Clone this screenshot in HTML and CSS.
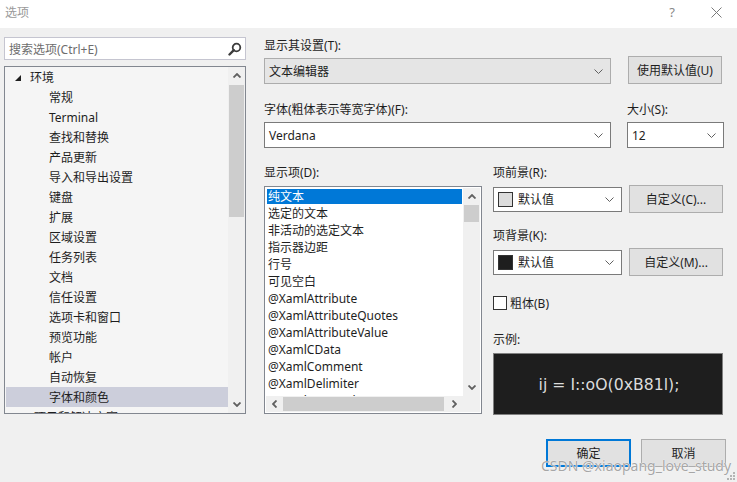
FILE: index.html
```html
<!DOCTYPE html>
<html lang="zh-CN">
<head>
    <meta charset="UTF-8">
    <title>选项</title>
    <link rel="stylesheet" href="styles.css">
</head>
<body>
    <div class="titlebar">
        <span class="title">选项</span>
        <span class="help">?</span>
        <svg class="close" width="11" height="11" viewBox="0 0 11 11"><path d="M0.5 0.5L10.5 10.5M10.5 0.5L0.5 10.5" stroke="#7a7a7a" stroke-width="1" fill="none"/></svg>
    </div>

    <div class="main">
        <!-- 左侧：搜索和树 -->
        <div class="sidebar">
            <div class="search">
                <span class="placeholder">搜索选项(Ctrl+E)</span>
                <svg width="14" height="14" viewBox="0 0 14 14"><circle cx="8.5" cy="5.5" r="3.8" stroke="#3c3c3c" stroke-width="1.8" fill="none"/><path d="M5.8 8.2L1.5 12.5" stroke="#3c3c3c" stroke-width="2.4" stroke-linecap="round"/></svg>
            </div>
            <div class="tree">
                <ul class="tree-items">
                    <li class="node"><svg class="tri" width="6" height="6" viewBox="0 0 6 6"><path d="M6 0V6H0Z" fill="#1e1e1e"/></svg>环境</li>
                    <li class="leaf">常规</li>
                    <li class="leaf">Terminal</li>
                    <li class="leaf">查找和替换</li>
                    <li class="leaf">产品更新</li>
                    <li class="leaf">导入和导出设置</li>
                    <li class="leaf">键盘</li>
                    <li class="leaf">扩展</li>
                    <li class="leaf">区域设置</li>
                    <li class="leaf">任务列表</li>
                    <li class="leaf">文档</li>
                    <li class="leaf">信任设置</li>
                    <li class="leaf">选项卡和窗口</li>
                    <li class="leaf">预览功能</li>
                    <li class="leaf">帐户</li>
                    <li class="leaf">自动恢复</li>
                    <li class="leaf selected">字体和颜色</li>
                    <li class="node sub">项目和解决方案</li>
                </ul>
                <div class="vscroll">
                    <span class="sbtn"><svg width="8" height="5" viewBox="0 0 8 5"><path d="M0.5 4.5L4 1L7.5 4.5" stroke="#606060" stroke-width="1.8" fill="none"/></svg></span>
                    <div class="track"><div class="thumb tree-thumb"></div></div>
                    <span class="sbtn"><svg width="8" height="5" viewBox="0 0 8 5"><path d="M0.5 0.5L4 4L7.5 0.5" stroke="#606060" stroke-width="1.8" fill="none"/></svg></span>
                </div>
            </div>
        </div>

        <!-- 右侧：设置 -->
        <div class="settings">
            <div class="row first">
                <div class="field wide">
                    <div class="lbl">显示其设置(T):</div>
                    <div class="combo readonly">
                        <span>文本编辑器</span>
                        <svg width="9" height="5" viewBox="0 0 9 5"><path d="M0.5 0.5L4.5 4.5L8.5 0.5" stroke="#606060" fill="none"/></svg>
                    </div>
                </div>
                <button class="btn">使用默认值(U)</button>
            </div>

            <div class="row second">
                <div class="field wide">
                    <div class="lbl">字体(粗体表示等宽字体)(F):</div>
                    <div class="combo">
                        <span>Verdana</span>
                        <svg width="9" height="5" viewBox="0 0 9 5"><path d="M0.5 0.5L4.5 4.5L8.5 0.5" stroke="#606060" fill="none"/></svg>
                    </div>
                </div>
                <div class="field size">
                    <div class="lbl">大小(S):</div>
                    <div class="combo">
                        <span>12</span>
                        <svg width="9" height="5" viewBox="0 0 9 5"><path d="M0.5 0.5L4.5 4.5L8.5 0.5" stroke="#606060" fill="none"/></svg>
                    </div>
                </div>
            </div>

            <div class="row third">
                <div class="items-col">
                    <div class="lbl">显示项(D):</div>
                    <div class="listbox">
                        <ul class="list-items">
                            <li class="selected">纯文本</li>
                            <li>选定的文本</li>
                            <li>非活动的选定文本</li>
                            <li>指示器边距</li>
                            <li>行号</li>
                            <li>可见空白</li>
                            <li>@XamlAttribute</li>
                            <li>@XamlAttributeQuotes</li>
                            <li>@XamlAttributeValue</li>
                            <li>@XamlCData</li>
                            <li>@XamlComment</li>
                            <li>@XamlDelimiter</li>
                            <li>@XamlKeyword</li>
                        </ul>
                        <div class="vscroll small">
                            <span class="sbtn"><svg width="8" height="5" viewBox="0 0 8 5"><path d="M0.5 4.5L4 1L7.5 4.5" stroke="#606060" stroke-width="1.8" fill="none"/></svg></span>
                            <div class="track"><div class="thumb list-thumb"></div></div>
                            <span class="sbtn"><svg width="8" height="5" viewBox="0 0 8 5"><path d="M0.5 0.5L4 4L7.5 0.5" stroke="#606060" stroke-width="1.8" fill="none"/></svg></span>
                        </div>
                        <div class="hscroll">
                            <span class="sbtn"><svg width="5" height="8" viewBox="0 0 5 8"><path d="M4.5 0.5L1 4L4.5 7.5" stroke="#606060" stroke-width="1.8" fill="none"/></svg></span>
                            <div class="htrack"><div class="hthumb"></div></div>
                            <span class="sbtn"><svg width="5" height="8" viewBox="0 0 5 8"><path d="M0.5 0.5L4 4L0.5 7.5" stroke="#606060" stroke-width="1.8" fill="none"/></svg></span>
                        </div>
                        <div class="corner"></div>
                    </div>
                </div>

                <div class="color-col">
                    <div class="lbl">项前景(R):</div>
                    <div class="color-row">
                        <div class="combo color">
                            <span class="swatch light"></span>
                            <span>默认值</span>
                            <svg width="9" height="5" viewBox="0 0 9 5"><path d="M0.5 0.5L4.5 4.5L8.5 0.5" stroke="#606060" fill="none"/></svg>
                        </div>
                        <button class="btn">自定义(C)...</button>
                    </div>

                    <div class="lbl gap">项背景(K):</div>
                    <div class="color-row">
                        <div class="combo color">
                            <span class="swatch dark"></span>
                            <span>默认值</span>
                            <svg width="9" height="5" viewBox="0 0 9 5"><path d="M0.5 0.5L4.5 4.5L8.5 0.5" stroke="#606060" fill="none"/></svg>
                        </div>
                        <button class="btn">自定义(M)...</button>
                    </div>

                    <label class="check"><span class="box"></span>粗体(B)</label>

                    <div class="lbl sample-lbl">示例:</div>
                    <div class="sample">ij = I::oO(0xB81l);</div>
                </div>
            </div>
        </div>
    </div>

    <div class="footer">
        <button class="btn ok">确定</button>
        <button class="btn cancel">取消</button>
    </div>

    <div class="watermark">CSDN @xiaopang_love_study</div>
    <svg class="grip" width="8" height="8" viewBox="0 0 8 8" fill="#b4b4b4">
        <rect x="6" y="0" width="2" height="2"/><rect x="3" y="3" width="2" height="2"/><rect x="6" y="3" width="2" height="2"/>
        <rect x="0" y="6" width="2" height="2"/><rect x="3" y="6" width="2" height="2"/><rect x="6" y="6" width="2" height="2"/>
    </svg>
</body>
</html>
```

FILE: styles.css
```css
:root {
    --bg: #f0f0f0;
    --text: #1e1e1e;
    --border: #828790;
    --btn-bg: #e1e1e1;
    --btn-border: #adadad;
    --accent: #0078d7;
}

* {
    margin: 0;
    padding: 0;
    box-sizing: border-box;
}

body {
    width: 737px;
    height: 482px;
    background: var(--bg);
    color: var(--text);
    font-family: "Noto Sans", "Noto Sans CJK SC", sans-serif;
    font-size: 12px;
    overflow: hidden;
    position: relative;
}

ul {
    list-style: none;
}

.titlebar {
    height: 28px;
    background: #fff;
    display: flex;
    align-items: center;
    padding-left: 5px;
}

.title {
    color: #999;
    flex: 1;
    margin-top: -4px;
}

.help {
    color: #888;
    font-size: 13px;
    margin-right: 36px;
    margin-top: -4px;
}

.close {
    margin-right: 15px;
    margin-top: -4px;
}

.main {
    display: flex;
    padding: 9px 0 0 4px;
}

/* 左侧 */
.sidebar {
    width: 242px;
    display: flex;
    flex-direction: column;
}

.search {
    height: 23px;
    background: #fff;
    border: 1px solid #c5c5d0;
    display: flex;
    align-items: center;
    justify-content: space-between;
    padding: 0 3px 0 4px;
}

.placeholder {
    color: #6d6d6d;
}

.tree {
    margin-top: 6px;
    height: 348px;
    border: 1px solid var(--border);
    background: #f5f5f5;
    display: flex;
    overflow: hidden;
}

.tree-items {
    flex: 1;
    padding-left: 1px;
}

.tree-items li {
    height: 20px;
    line-height: 20px;
    padding-top: 1px;
    white-space: nowrap;
    display: flex;
    align-items: center;
}

.tree-items .node {
    padding-left: 9px;
}

.tree-items .node .tri {
    margin-right: 9px;
}

.tree-items .node.sub {
    padding-left: 28px;
}

.tree-items .leaf {
    padding-left: 43px;
}

.tree-items .selected {
    background: #cccedb;
}

.vscroll {
    width: 17px;
    background: #f0f0f0;
    display: flex;
    flex-direction: column;
}

.sbtn {
    height: 17px;
    width: 17px;
    flex: none;
    display: flex;
    align-items: center;
    justify-content: center;
}

.track {
    flex: 1;
}

.thumb {
    background: #cdcdcd;
    margin: 0 1px;
}

.tree-thumb {
    margin-top: 1px;
    height: 132px;
}

.list-thumb {
    height: 17px;
}

/* 右侧 */
.settings {
    margin-left: 18px;
    width: 460px;
    padding-top: 1px;
}

.row {
    display: flex;
}

.row.first {
    align-items: flex-end;
    gap: 17px;
}

.row.second {
    margin-top: 18px;
    gap: 16px;
}

.row.third {
    margin-top: 17px;
    gap: 11px;
}

.lbl {
    height: 16px;
    line-height: 16px;
    white-space: nowrap;
}

.field.wide {
    width: 347px;
}

.field.size {
    width: 97px;
}

.combo {
    margin-top: 4px;
    height: 26px;
    background: #fff;
    border: 1px solid #7a7a7a;
    display: flex;
    align-items: center;
    justify-content: space-between;
    padding: 0 7px 0 4px;
}

.combo.readonly {
    background: #e5e5e5;
    border-color: #acacac;
}

.btn {
    height: 28px;
    width: 94px;
    background: var(--btn-bg);
    border: 1px solid var(--btn-border);
    font-family: inherit;
    font-size: 12px;
    color: var(--text);
    flex: none;
}

.items-col {
    width: 218px;
}

.listbox {
    margin-top: 5px;
    height: 228px;
    border: 1px solid var(--border);
    background: #fff;
    padding: 1px;
    display: grid;
    grid-template-columns: 1fr 17px;
    grid-template-rows: 1fr 16px;
}

.list-items {
    overflow: hidden;
}

.list-items li {
    height: 17px;
    line-height: 17px;
    padding-left: 2px;
    white-space: nowrap;
}

.list-items .selected {
    background: var(--accent);
    color: #fff;
    box-shadow: inset 0 0 0 1px #fff;
}

.hscroll {
    background: #f0f0f0;
    display: flex;
    align-items: center;
}

.hscroll .sbtn {
    height: 16px;
}

.htrack {
    flex: 1;
    height: 100%;
    padding: 1px 0 0 0;
}

.hthumb {
    background: #cdcdcd;
    width: 161px;
    height: 14px;
}

.corner {
    background: #f0f0f0;
}

.color-col {
    width: 230px;
}

.color-row {
    margin-top: 4px;
    display: flex;
    align-items: center;
    gap: 7px;
}

.combo.color {
    margin-top: 0;
    width: 129px;
    height: 25px;
    justify-content: flex-start;
    padding: 0 7px 0 4px;
}

.combo.color svg {
    margin-left: auto;
}

.swatch {
    width: 15px;
    height: 15px;
    border: 1px solid #333;
    margin-right: 5px;
}

.swatch.light {
    background: #dcdcdc;
}

.swatch.dark {
    background: #1e1e1e;
}

.lbl.gap {
    margin-top: 15px;
}

.check {
    margin-top: 20px;
    display: flex;
    align-items: center;
    height: 14px;
}

.box {
    width: 14px;
    height: 14px;
    border: 1px solid #333;
    background: #fff;
    margin-right: 3px;
}

.sample-lbl {
    margin-top: 22px;
}

.sample {
    margin-top: 5px;
    height: 62px;
    background: #1e1e1e;
    border: 1px solid #808080;
    color: #dcdcdc;
    font-family: "DejaVu Sans", sans-serif;
    font-size: 15.7px;
    display: flex;
    align-items: center;
    justify-content: center;
    padding-left: 2px;
}

.footer {
    margin-top: 24px;
    display: flex;
    justify-content: flex-end;
    gap: 10px;
    padding-right: 11px;
}

.footer .btn {
    width: 85px;
}

.footer .ok {
    border: 2px solid var(--accent);
}

.watermark {
    position: absolute;
    left: 541px;
    top: 456px;
    font-size: 14px;
    color: #a6a6a6;
    text-shadow: 0 0 1px #fff, 0 0 1px #fff;
    white-space: nowrap;
}

.grip {
    position: absolute;
    right: 2px;
    bottom: 2px;
}
```
